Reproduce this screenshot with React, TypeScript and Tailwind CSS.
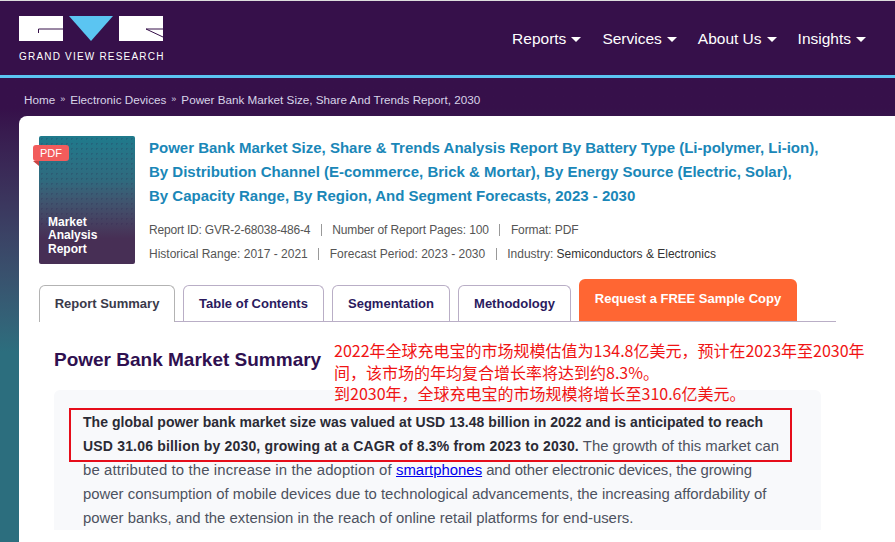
const font = "font-['Liberation_Sans',Arial,sans-serif]";

const NavItem = ({ label }: { label: string }) => (
  <div className="flex items-center gap-[5px] text-[15.5px] text-white">
    <span>{label}</span>
    <span className="mt-[1px] h-0 w-0 border-x-[5px] border-t-[5px] border-x-transparent border-t-white" />
  </div>
);

const Logo = () => (
  <div className="flex flex-col">
    <svg width="145" height="25" viewBox="0 0 145 25">
      <rect x="0" y="0" width="44" height="25" fill="#fff" />
      <path d="M44 13H19.5v4" fill="none" stroke="#36104a" strokeWidth="1" />
      <path d="M50 0h44L72 25z" fill="#5bc5f2" />
      <rect x="100" y="0" width="44" height="25" fill="#fff" />
      <path d="M144 13h-17l17 8" fill="none" stroke="#36104a" strokeWidth="1" />
    </svg>
    <span className="mt-[10px] text-[10px] leading-[12px] tracking-[1.2px] text-white">GRAND VIEW RESEARCH</span>
  </div>
);

const Tab = ({ label, width, active }: { label: string; width: string; active?: boolean }) => (
  <div
    className={`flex items-center justify-center rounded-t-[6px] border border-b-0 text-[13px] font-bold ${width} ${
      active ? '-mb-px h-[37px] border-[#b3b3b3] bg-white text-[#3a3a4a]' : 'h-[36px] border-[#b9aec6] text-[#2a1a5e]'
    }`}
  >
    {label}
  </div>
);

const Sep = () => <span className="mx-[10.5px] h-[12px] w-px bg-[#999]" />;

export default function App() {
  return (
    <div className={`${font} h-[542px] w-[895px] overflow-hidden bg-gradient-to-b from-[#36104a] from-[20%] to-[#2c6e7e] to-[65%]`}>
      <header className="flex h-[78px] items-start justify-between border-t border-t-[#ddd] border-b-[3px] border-b-[#5bc5f2] bg-[#36104a] pl-[19px] pr-[29px] pt-[15px]">
        <Logo />
        <nav className="mt-[11px] flex items-center gap-[21px]">
          <NavItem label="Reports" />
          <NavItem label="Services" />
          <NavItem label="About Us" />
          <NavItem label="Insights" />
        </nav>
      </header>

      <div className="flex h-[38px] items-center gap-[5px] pl-[24px] pt-[6px] text-[11.7px] text-[#d8d4e8]">
        <span>Home</span>
        <span className="text-[9px]">»</span>
        <span>Electronic Devices</span>
        <span className="text-[9px]">»</span>
        <span>Power Bank Market Size, Share And Trends Report, 2030</span>
      </div>

      <main className="relative ml-[19px] h-[426px] overflow-hidden rounded-tl-[8px] bg-white pl-[20px] pt-[20px]">
        <section className="flex gap-[14px]">
          <div className="relative h-[128px] w-[96px] shrink-0 rounded-[2px] bg-gradient-to-b from-[#1e7a8c] via-[#2f6a7e] via-[35%] to-[#472f55] to-[80%]">
            <div className="absolute inset-x-0 top-0 h-[90px] bg-[radial-gradient(rgba(40,20,70,0.18)_1px,transparent_1px)] bg-[length:5px_5px]" />
            <span className="absolute left-[-6px] top-[9px] rounded-[3px] bg-[#f25c5c] px-[7px] py-[1px] text-[11px] leading-[14px] text-white">PDF</span>
            <span className="absolute left-[-6px] top-[25px] h-0 w-0 border-l-[6px] border-t-[5px] border-l-transparent border-t-[#c94545]" />
            <div className="absolute bottom-[8px] left-[9px] text-[12px] font-bold leading-[13.5px] text-white">
              Market<br />Analysis<br />Report
            </div>
          </div>
          <div className="min-w-0">
            <h1 className="text-[15px] font-bold leading-[24px] text-[#1a87b8]">
              Power Bank Market Size, Share &amp; Trends Analysis Report By Battery Type (Li-polymer, Li-ion),<br />
              By Distribution Channel (E-commerce, Brick &amp; Mortar), By Energy Source (Electric, Solar),<br />
              By Capacity Range, By Region, And Segment Forecasts, 2023 - 2030
            </h1>
            <div className="mt-[10px] flex items-center text-[12px] leading-[24px] tracking-[-0.1px] text-[#555]">
              <span className="tracking-[-0.2px]">Report ID: GVR-2-68038-486-4</span>
              <Sep />
              <span>Number of Report Pages: 100</span>
              <Sep />
              <span>Format: PDF</span>
            </div>
            <div className="flex items-center text-[12px] leading-[24px] text-[#555]">
              <span>Historical Range: 2017 - 2021</span>
              <Sep />
              <span>Forecast Period: 2023 - 2030</span>
              <Sep />
              <span>Industry: <span className="text-[#333]">Semiconductors &amp; Electronics</span></span>
            </div>
          </div>
        </section>

        <div className="mt-[13px] flex h-[43px] w-[797px] items-end border-b border-[#b9aec6]">
          <div className="flex items-end gap-[8px]">
            <Tab label="Report Summary" width="w-[136px]" active />
            <Tab label="Table of Contents" width="w-[141px]" />
            <Tab label="Segmentation" width="w-[118px]" />
            <Tab label="Methodology" width="w-[113px]" />
            <div className="flex h-[42px] w-[218px] items-center justify-center rounded-t-[6px] bg-[#ff6633] pb-[3px] text-[13px] font-bold text-white">
              Request a FREE Sample Copy
            </div>
          </div>
        </div>

        <div className="ml-[15px] mt-[26px] w-fit text-[19px] font-bold leading-[24px] text-[#2f1050]">Power Bank Market Summary</div>

        <div className="ml-[15px] mt-[18px] w-[767px] rounded-t-[6px] bg-[#f8f9fb] pl-[29px] pt-[20px] text-[14.9px] leading-[24px] text-[#4d5260]">
          <p>
            <strong className="text-[14px] font-bold tracking-[0.04px] text-[#2b2b35]">
              The global power bank market size was valued at USD 13.48 billion in 2022 and is anticipated to reach
            </strong>
            <br />
            <strong className="text-[14px] font-bold tracking-[0.18px] text-[#2b2b35]">
              USD 31.06 billion by 2030, growing at a CAGR of 8.3% from 2023 to 2030.
            </strong>{' '}
            The growth of this market can<br />
            <span className="tracking-[0.12px]">be attributed to the increase in the adoption of </span>
            <a className="text-[#0000ee] underline">smartphones</a>
            <span className="tracking-[-0.12px]"> and other electronic devices, the growing</span><br />
            power consumption of mobile devices due to technological advancements, the increasing affordability of<br />
            power banks, and the extension in the reach of online retail platforms for end-users.
          </p>
        </div>

        {/* red annotation on top of the page */}
        <div className="absolute left-[315px] top-[224px] whitespace-nowrap font-['Noto_Sans_CJK_SC',sans-serif] text-[16px] leading-[21.5px] text-[#f01414]">
          2022年全球充电宝的市场规模估值为134.8亿美元，预计在2023年至2030年<br />
          间，该市场的年均复合增长率将达到约8.3%。<br />
          到2030年，全球充电宝的市场规模将增长至310.6亿美元。
        </div>
        <div className="absolute left-[50px] top-[292px] h-[54px] w-[723px] border-2 border-[#e60d1a]" />
      </main>
    </div>
  );
}
